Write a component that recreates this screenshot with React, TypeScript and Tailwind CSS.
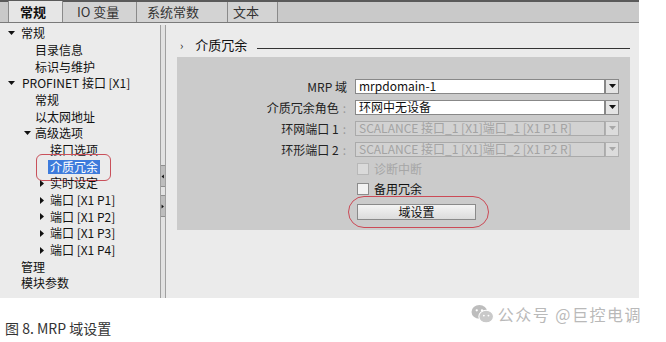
import React from 'react'

type Node = { text: string; x: number; arrow?: 'down' | 'right'; ax?: number; selected?: boolean }

const tree: Node[] = [
  { text: '常规', x: 21, arrow: 'down', ax: 8 },
  { text: '目录信息', x: 35 },
  { text: '标识与维护', x: 35 },
  { text: 'PROFINET 接口 [X1]', x: 22, arrow: 'down', ax: 8 },
  { text: '常规', x: 35 },
  { text: '以太网地址', x: 35 },
  { text: '高级选项', x: 35, arrow: 'down', ax: 24 },
  { text: '接口选项', x: 50 },
  { text: '介质冗余', x: 50, selected: true },
  { text: '实时设定', x: 50, arrow: 'right', ax: 39 },
  { text: '端口 [X1 P1]', x: 50, arrow: 'right', ax: 39 },
  { text: '端口 [X1 P2]', x: 50, arrow: 'right', ax: 39 },
  { text: '端口 [X1 P3]', x: 50, arrow: 'right', ax: 39 },
  { text: '端口 [X1 P4]', x: 50, arrow: 'right', ax: 39 },
  { text: '管理', x: 21 },
  { text: '模块参数', x: 21 },
]

function Arrow({ dir, color = '#111' }: { dir: 'down' | 'right' | 'left'; color?: string }) {
  const pts = dir === 'down' ? '0,1 7,1 3.5,5' : dir === 'right' ? '1,0 5,3.5 1,7' : '5,0 1,3.5 5,7'
  return (
    <svg width="7" height="7" viewBox="0 0 7 7">
      <polygon points={pts} fill={color} />
    </svg>
  )
}

function TreeRow({ node }: { node: Node }) {
  return (
    <div className="relative h-[16.67px] flex items-center">
      {node.arrow && (
        <div className="absolute top-[5px]" style={{ left: node.ax }}>
          <Arrow dir={node.arrow} />
        </div>
      )}
      <div className="absolute" style={{ left: node.selected ? node.x - 2 : node.x }}>
        {node.selected ? (
          <span className="relative block bg-[#3d7bdc] text-white px-[2px] leading-[14px]">
            {node.text}
            <span className="absolute left-[-12px] right-[-11px] top-[-6px] bottom-[-7px] border-[1.5px] border-[#c9505a] rounded-[6px]" />
          </span>
        ) : (
          <span className="leading-[14px] text-[#111]">{node.text}</span>
        )}
      </div>
    </div>
  )
}

function Combo({ value, disabled }: { value: string; disabled?: boolean }) {
  return (
    <div className="flex h-[15px]">
      <div
        className={`w-[250px] h-full border flex items-center pl-[3px] text-[12px] leading-[12px] pb-[1px] whitespace-nowrap ${
          disabled ? 'bg-[#d2d2d2] border-[#aaaaaa] text-[#a3a3a3]' : 'bg-white border-[#888888] text-[#111]'
        }`}
      >
        {value}
      </div>
      <div
        className={`w-[14px] h-full border flex items-center justify-center ${
          disabled ? 'bg-[#dcdcdc] border-[#b0b0b0]' : 'bg-[#e4e4e4] border-[#888888]'
        }`}
      >
        <Arrow dir="down" color={disabled ? '#a8a8a8' : '#111'} />
      </div>
    </div>
  )
}

function Label({ text, colon }: { text: string; colon?: boolean }) {
  return (
    <div className="h-[15px] flex items-center justify-end text-[12px] text-[#222] leading-none">
      <span>{text}</span>
      {colon && <span className="ml-[4px] mr-[1px] text-[#9a9a9a]">:</span>}
    </div>
  )
}

function WeChatIcon() {
  return (
    <svg width="23" height="20" viewBox="0 0 22 19">
      <ellipse cx="8" cy="7.5" rx="7.5" ry="6.5" fill="#bdbdbd" />
      <ellipse cx="14.5" cy="12" rx="7" ry="6" fill="#c9c9c9" stroke="#fff" strokeWidth="1" />
      <circle cx="5.5" cy="6" r="1.1" fill="#fff" />
      <circle cx="10.5" cy="6" r="1.1" fill="#fff" />
      <circle cx="12.3" cy="11" r="0.9" fill="#fff" />
      <circle cx="16.7" cy="11" r="0.9" fill="#fff" />
    </svg>
  )
}

export default function App() {
  return (
    <div
      className="w-[666px] h-[342px] bg-white overflow-hidden"
      style={{ fontFamily: '"Noto Sans CJK SC", "Noto Sans", sans-serif' }}
    >
      <div className="w-[639px] h-[298px] flex flex-col">
        {/* tab strip */}
        <div className="h-[23px] bg-[#c9c9c9] border-t-2 border-[#5a5a5a] border-b border-b-[#7a7a7a] flex items-end pl-[8px]">
          <div className="w-[55px] h-[21px] bg-[#e6e6e6] border-x border-[#8a8a8a] flex items-center pl-[11px] text-[13px] font-bold text-[#111]">
            常规
          </div>
          <div className="w-[74px] h-[20px] bg-[#d3d3d3] border-r border-[#8a8a8a] flex items-center pl-[14px] text-[13px] text-[#333]">
            IO 变量
          </div>
          <div className="w-[91px] h-[20px] bg-[#d3d3d3] border-r border-[#8a8a8a] flex items-center pl-[10px] text-[13px] text-[#333]">
            系统常数
          </div>
          <div className="w-[50px] h-[20px] bg-[#d3d3d3] border-r border-[#8a8a8a] flex items-center pl-[5px] text-[13px] text-[#333]">
            文本
          </div>
        </div>

        <div className="flex-1 flex bg-[#ebebeb]">
          {/* tree */}
          <div className="w-[160px] pt-[2px] text-[12px]">
            {tree.map((n, i) => (
              <TreeRow key={i} node={n} />
            ))}
          </div>

          {/* splitter */}
          <div className="w-[6px] mt-[2px] border-x border-[#a0a0a0] bg-[#e2e2e2] flex flex-col">
            <div className="h-[140px]" />
            <div className="h-[22px] bg-[#bdbdbd] border-y border-[#8f8f8f] flex items-center justify-center">
              <Arrow dir="left" />
            </div>
            <div className="h-[8px]" />
            <div className="h-[22px] bg-[#bdbdbd] border-y border-[#8f8f8f] flex items-center justify-center">
              <Arrow dir="right" />
            </div>
          </div>

          {/* detail panel */}
          <div className="flex-1 flex flex-col pt-[12px] pl-[11px] pr-[9px]">
            <div className="h-[20px] flex items-center">
              <span className="text-[11px] text-[#222] ml-[3px]">›</span>
              <span className="ml-[12px] text-[13px] text-[#111]">介质冗余</span>
              <div className="flex-1 h-px bg-[#333] ml-[10px] mt-[6px]" />
            </div>

            <div className="mt-[2px] h-[173px] bg-[#cbcbcb] pt-[22px]">
              <div className="grid grid-cols-[170px_264px] gap-x-[8px] gap-y-[6px]">
                <Label text="MRP 域" />
                <Combo value="mrpdomain-1" />
                <Label text="介质冗余角色" colon />
                <Combo value="环网中无设备" />
                <Label text="环网端口 1" colon />
                <Combo value="SCALANCE 接口_1 [X1]端口_1 [X1 P1 R]" disabled />
                <Label text="环形端口 2" colon />
                <Combo value="SCALANCE 接口_1 [X1]端口_2 [X1 P2 R]" disabled />
              </div>

              <div className="pl-[180px] flex flex-col">
                <div className="mt-[5px] h-[14px] flex items-center">
                  <div className="w-[12px] h-[12px] border border-[#b8b8b8] bg-[#dadada]" />
                  <span className="ml-[5px] text-[12px] text-[#a6a6a6]">诊断中断</span>
                </div>
                <div className="mt-[6px] h-[14px] flex items-center">
                  <div className="w-[12px] h-[12px] border border-[#8c8c8c] bg-[#f2f2f2]" />
                  <span className="ml-[5px] text-[12px] text-[#111]">备用冗余</span>
                </div>
                <div className="mt-[8px] relative w-[119px]">
                  <div className="h-[16px] border border-[#8a8a8a] bg-gradient-to-b from-[#f4f4f4] to-[#dcdcdc] flex items-center justify-center text-[12px] text-[#111]">
                    域设置
                  </div>
                  <div className="absolute left-[-9px] right-[-13px] top-[-8px] bottom-[-8px] border-[1.5px] border-[#cc4a56] rounded-[16px]" />
                </div>
              </div>
            </div>
          </div>
        </div>
      </div>

      {/* caption + watermark */}
      <div className="flex justify-between pl-[5px] pr-[24px]">
        <div className="pt-[20px] text-[14px] text-[#333]">图 8. MRP 域设置</div>
        <div className="pt-[6px] flex items-start">
          <WeChatIcon />
          <span className="ml-[4px] text-[16px] leading-[20px] tracking-[1.5px] text-[#b9b9b9]">公众号 @巨控电调</span>
        </div>
      </div>
    </div>
  )
}
